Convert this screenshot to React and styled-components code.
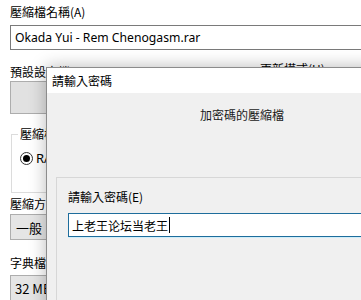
import React from "react";
import styled, { createGlobalStyle } from "styled-components";

const GlobalStyle = createGlobalStyle`
  html, body { margin: 0; padding: 0; background: #ffffff; overflow: hidden; }
  body {
    width: 361px; height: 300px;
    font-family: "Noto Sans", "Noto Sans CJK TC", sans-serif;
    color: #000;
  }
`;

const cjk = `"Noto Sans CJK TC", "Noto Sans", sans-serif`;

const Desktop = styled.div`
  position: relative;
  width: 361px;
  height: 300px;
  overflow: hidden;
  background: #ffffff;
`;

const MainWindow = styled.div`
  padding: 4px 0 0 10px;
  width: 520px;
`;

const Label = styled.div`
  font-family: ${cjk};
  font-size: 12px;
  line-height: 16px;
  height: 16px;
  margin-top: ${(p) => p.$mt || 0}px;
  white-space: nowrap;
`;

const TextField = styled.div`
  margin-top: 5px;
  width: 440px;
  height: 23px;
  border: 1px solid #7a7a7a;
  background: #fff;
  display: flex;
  align-items: center;
  padding-left: 4px;
  font-family: "Noto Sans", sans-serif;
  font-size: 12.2px;
  white-space: nowrap;
`;

const Columns = styled.div`
  display: flex;
  gap: 50px;
`;

const LeftCol = styled.div`
  width: 200px;
  display: flex;
  flex-direction: column;
`;

const RightCol = styled.div`
  display: flex;
  flex-direction: column;
`;

const ProfileButton = styled.div`
  margin-top: 1px;
  height: 31px;
  border: 1px solid #adadad;
  background: #e1e1e1;
`;

const Group = styled.fieldset`
  margin: 12px 0 0 1px;
  padding: 7px 0 0 8px;
  height: 58px;
  border: 1px solid #dcdcdc;
  min-width: 0;
`;

const Legend = styled.legend`
  font-family: ${cjk};
  font-size: 12px;
  line-height: 16px;
  padding: 0 2px;
  margin-left: -2px;
`;

const RadioRow = styled.div`
  display: flex;
  align-items: center;
  gap: 3px;
  font-family: "Noto Sans", sans-serif;
  font-size: 13px;
  height: 18px;
`;

const Radio = styled.span`
  width: 11px;
  height: 11px;
  border: 1px solid #333;
  border-radius: 50%;
  display: flex;
  align-items: center;
  justify-content: center;
  &::after {
    content: "";
    width: 7px;
    height: 7px;
    border-radius: 50%;
    background: #000;
  }
`;

const Combo = styled.div`
  margin-top: ${(p) => p.$mt || 0}px;
  height: 24px;
  border: 1px solid #adadad;
  background: #e5e5e5;
  display: flex;
  align-items: center;
  padding-left: ${(p) => p.$pl || 5}px;
  font-family: ${cjk};
  font-size: 13px;
  white-space: nowrap;
`;

/* password dialog — a window on top of the main one */
const Dialog = styled.div`
  position: absolute;
  left: 46px;
  top: 67px;
  width: 380px;
  height: 280px;
  border: 1px solid #8c8c8c;
  background: #f0f0f0;
  box-shadow: 0 0 16px rgba(0, 0, 0, 0.28);
  display: flex;
  flex-direction: column;
`;

const TitleBar = styled.div`
  height: 25px;
  background: #ffffff;
  display: flex;
  align-items: center;
  padding-left: 5px;
  font-family: ${cjk};
  font-size: 12px;
`;

const DialogBody = styled.div`
  padding-top: 14px;
  display: flex;
  flex-direction: column;
`;

const Heading = styled.div`
  padding-left: 153px;
  font-family: ${cjk};
  font-size: 12px;
  line-height: 16px;
  color: #1a1a1a;
`;

const Panel = styled.div`
  margin: 54px 0 0 9px;
  border-top: 1px solid #d7d7d7;
  border-left: 1px solid #d7d7d7;
  padding: 11px 0 0 11px;
  height: 120px;
`;

const PassField = styled.div`
  margin-top: 8px;
  height: 22px;
  width: 320px;
  border: 1px solid #1e6d9c;
  box-shadow: 0 1px 0 #cfeefa;
  background: #fff;
  display: flex;
  align-items: center;
  padding-left: 3px;
  font-family: "Noto Sans CJK SC", sans-serif;
  font-size: 12px;
`;

const Caret = styled.span`
  display: inline-block;
  width: 1px;
  height: 16px;
  background: #000;
  margin-left: 1px;
`;

export default function App() {
  return (
    <>
      <GlobalStyle />
      <Desktop>
        <MainWindow>
          <Label>壓縮檔名稱(A)</Label>
          <TextField>Okada Yui - Rem Chenogasm.rar</TextField>
          <Columns>
            <LeftCol>
              <Label $mt={14}>預設設定檔</Label>
              <ProfileButton />
              <Group>
                <Legend>壓縮檔格式</Legend>
                <RadioRow>
                  <Radio />
                  RAR
                </RadioRow>
              </Group>
              <Label $mt={3}>壓縮方式(C)</Label>
              <Combo $mt={2}>一般</Combo>
              <Label $mt={15}>字典檔大小(I)</Label>
              <Combo $mt={4} $pl={4}>32 MB</Combo>
            </LeftCol>
            <RightCol>
              <Label $mt={11}>更新模式(U)</Label>
            </RightCol>
          </Columns>
        </MainWindow>

        <Dialog>
          <TitleBar>請輸入密碼</TitleBar>
          <DialogBody>
            <Heading>加密碼的壓縮檔</Heading>
            <Panel>
              <Label>請輸入密碼(E)</Label>
              <PassField>
                上老王论坛当老王
                <Caret />
              </PassField>
            </Panel>
          </DialogBody>
        </Dialog>
      </Desktop>
    </>
  );
}
